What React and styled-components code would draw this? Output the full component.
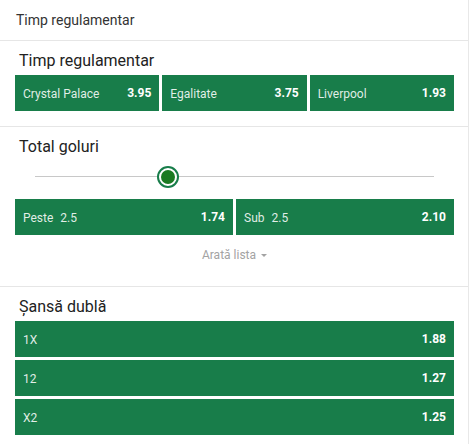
import React from "react";
import styled, { createGlobalStyle } from "styled-components";

const Global = createGlobalStyle`
  html, body { margin: 0; padding: 0; background: #fff; }
  body { font-family: Roboto, "Noto Sans", Arial, sans-serif; }
  * { box-sizing: border-box; }
`;

const GREEN = "#187d4a";

const Card = styled.div`
  width: 469px;
  background: #fff;
  border-right: 1px solid #e8e8e8;
  min-height: 444px;
`;

const Header = styled.div`
  height: 41px;
  padding-left: 16px;
  display: flex;
  align-items: center;
  font-size: 14px;
  color: #333;
  border-bottom: 1px solid #e6e6e6;
`;

const Section = styled.section`
  padding: 10px 14px ${(p) => p.$pb ?? 15}px 15px;
  border-bottom: ${(p) => (p.$last ? "none" : "1px solid #e6e6e6")};
`;

const Title = styled.h3`
  margin: 0 0 ${(p) => p.$mb ?? 4}px;
  padding-left: 4px;
  font-size: 16px;
  font-weight: 400;
  line-height: 20px;
  color: #222;
`;

const Grid = styled.div`
  display: grid;
  grid-template-columns: repeat(${(p) => p.$cols}, 1fr);
  gap: 3px;
`;

const Odd = styled.button`
  height: 36px;
  border: none;
  border-radius: 0;
  background: ${GREEN};
  color: #fff;
  display: flex;
  align-items: center;
  justify-content: space-between;
  padding: 0 8px;
  font-family: inherit;
  cursor: pointer;
`;

const Label = styled.span`
  font-size: 12px;
  color: rgba(255, 255, 255, 0.88);
`;

const Line = styled.span`
  margin-left: 7px;
  font-size: 12px;
  color: rgba(255, 255, 255, 0.88);
`;

const Price = styled.span`
  font-size: 12px;
  font-weight: 700;
  color: #fff;
`;

const SliderWrap = styled.div`
  height: 42px;
  padding: 19px 20px 0;
  display: flex;
  align-items: flex-start;
`;

const Track = styled.div`
  position: relative;
  flex: 1;
  height: 1px;
  background: #c8c8c8;
`;

const Thumb = styled.div`
  position: absolute;
  top: 50%;
  width: 22px;
  height: 22px;
  margin-left: -11px;
  margin-top: -11px;
  border-radius: 50%;
  background: #fff;
  border: 2px solid ${GREEN};
  display: flex;
  align-items: center;
  justify-content: center;
  &::after {
    content: "";
    width: 14px;
    height: 14px;
    border-radius: 50%;
    background: #1b7a22;
  }
`;

const More = styled.div`
  height: 20px;
  margin-top: 10px;
  display: flex;
  align-items: center;
  justify-content: center;
  gap: 5px;
  font-size: 12px;
  color: #a3a3a3;
`;

const Caret = styled.span`
  width: 0;
  height: 0;
  border-left: 3px solid transparent;
  border-right: 3px solid transparent;
  border-top: 3px solid #a3a3a3;
  margin-top: 1px;
`;

const OddButton = ({ label, line, price }) => (
  <Odd>
    <span>
      <Label>{label}</Label>
      {line && <Line>{line}</Line>}
    </span>
    <Price>{price}</Price>
  </Odd>
);

export default function App() {
  return (
    <>
      <Global />
      <Card>
        <Header>Timp regulamentar</Header>
        <Section>
          <Title>Timp regulamentar</Title>
          <Grid $cols={3}>
            <OddButton label="Crystal Palace" price="3.95" />
            <OddButton label="Egalitate" price="3.75" />
            <OddButton label="Liverpool" price="1.93" />
          </Grid>
        </Section>
        <Section $pb={21}>
          <Title $mb={0}>Total goluri</Title>
          <SliderWrap>
            <Track>
              <Thumb style={{ left: "33.3%" }} />
            </Track>
          </SliderWrap>
          <Grid $cols={2}>
            <OddButton label="Peste" line="2.5" price="1.74" />
            <OddButton label="Sub" line="2.5" price="2.10" />
          </Grid>
          <More>
            Arată lista <Caret />
          </More>
        </Section>
        <Section $last>
          <Title>Șansă dublă</Title>
          <Grid $cols={1}>
            <OddButton label="1X" price="1.88" />
            <OddButton label="12" price="1.27" />
            <OddButton label="X2" price="1.25" />
          </Grid>
        </Section>
      </Card>
    </>
  );
}
